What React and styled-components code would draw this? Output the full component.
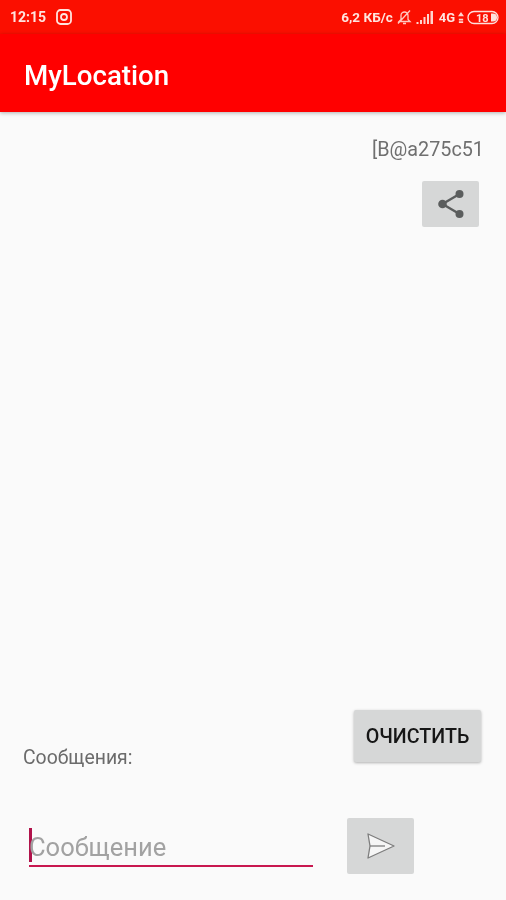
import React from "react";
import styled, { createGlobalStyle } from "styled-components";

const Global = createGlobalStyle`
  html, body { margin: 0; padding: 0; background: #fafafa; }
  body { font-family: Roboto, "Liberation Sans", sans-serif; }
`;
const Screen = styled.div`
  width: 506px; height: 900px; display: flex; flex-direction: column; background: #fafafa; overflow: hidden;
  filter: blur(0.5px);
`;
const StatusBar = styled.div`
  height: 34px; flex: none; background: #fb0f00; color: #ffe4de; display: flex; align-items: center;
  justify-content: space-between; padding: 0 7px 0 10px; font-size: 14px; font-weight: 700;
`;
const StatusGroup = styled.div`display: flex; align-items: center; gap: ${p => p.$gap || 6}px;`;
const SpeedText = styled.span`font-size: 13.5px;`;
const NetworkText = styled.span`font-size: 13px; margin-left: 2px;`;
const AppBar = styled.header`
  height: 78px; box-sizing: border-box; flex: none; background: #ff0000; color: #fff; display: flex; align-items: center;
  padding: 4px 24px 0; font-size: 27.7px; font-weight: 500; box-shadow: 0 1px 4px rgba(0,0,0,.3); position: relative;
`;
const Content = styled.main`flex: 1; display: flex; flex-direction: column; padding: 0 23px 0 23px;`;
const TopRight = styled.div`display: flex; flex-direction: column; align-items: flex-end; padding-top: 27px;`;
const CodeText = styled.div`font-size: 19.8px; line-height: 22px; color: #6f6f6f; margin-right: -1px;`;
const ShareButton = styled.button`
  width: 57px; height: 46px; margin: 20px 4px 0 0; padding: 0; border: 0; border-radius: 2px; background: #d6d7d7;
  display: flex; align-items: center; justify-content: center;
`;
const ClearRow = styled.div`display: flex; justify-content: space-between; align-items: flex-end; margin: 483px 2px 0 0;`;
const Label = styled.div`font-size: 19.4px; line-height: 22px; color: #6b6b6b; margin-bottom: -7px;`;
const ClearButton = styled.button`
  width: 127px; height: 52px; padding: 0; border: 0; border-radius: 2px; background: #d6d7d7; color: #161616;
  font: 500 19.7px Roboto, sans-serif; box-shadow: 0 1px 3px rgba(0,0,0,.3);
`;
const InputRow = styled.div`display: flex; align-items: flex-end; margin: 56px 0 0 6px;`;
const InputField = styled.div`
  width: 284px; height: 44px; box-sizing: border-box; border-bottom: 2px solid #c8174f; display: flex; align-items: center;
  font-size: 25.5px; color: #a2a2a2; margin-bottom: 7px;
`;
const Caret = styled.span`width: 3px; height: 34px; background: #b0124a; flex: none; margin-right: -3px; margin-top: 2px;`;
const Placeholder = styled.span`margin-top: 6px;`;
const SendButton = styled.button`
  width: 67px; height: 56px; margin-left: 34px; padding: 0; border: 0; border-radius: 2px; background: #d6d7d7;
  display: flex; align-items: center; justify-content: center;
`;

const Instagram = () => (
  <svg width="16" height="16" viewBox="0 0 16 16" fill="none" stroke="#ffe4de" strokeWidth="1.800">
    <rect x="1" y="1" width="14" height="14" rx="3.500" /><circle cx="8" cy="8" r="3" />
  </svg>
);
const Mute = () => (
  <svg width="17" height="18" viewBox="0 0 17 17" fill="none" stroke="#ffc9c0" strokeWidth="1.300">
    <path d="M3 13h11l-2-2V7a3.500 3.500 0 0 0-7 0v4zM7 15h3M2 15 14 2" />
  </svg>
);
const Signal = () => (
  <svg width="18" height="13" viewBox="0 0 17 13" fill="#ffd5cd">
    <path d="M0 11h2v2H0zM3.500 9h2v4h-2zM7 6h2v7H7zM10.500 3h2v10h-2zM14 0h2.500v13H14z" />
  </svg>
);
const Arrows = () => (
  <svg width="6" height="13" viewBox="0 0 7 13" fill="#ffd5cd"><path d="M3.500 0 7 5H0zM1 8h5v2H1zM1 11h5v2H1z" /></svg>
);
const Battery = () => (
  <svg width="32" height="15" viewBox="0 0 32 15">
    <rect x="1" y="1.500" width="30" height="12" rx="6" fill="none" stroke="#ffe2dc" strokeWidth="1.300" />
    <path d="M24 3.500h2a4 4 0 0 1 0 8h-2z" fill="#ffe2dc" />
    <text x="9" y="11.500" fontSize="11" fontWeight="700" fill="#ffe2dc" fontFamily="Roboto, sans-serif">18</text>
  </svg>
);
const ShareIcon = () => (
  <svg width="30" height="30" viewBox="0 0 30 30">
    <path d="M23.500 5 6.500 15l17 10" fill="none" stroke="#5b5d5d" strokeWidth="2.400" />
    <circle cx="23.500" cy="5" r="4" fill="#5b5d5d" /><circle cx="6.500" cy="15" r="4.300" fill="#5b5d5d" /><circle cx="23.500" cy="25" r="4" fill="#5b5d5d" />
  </svg>
);
const SendIcon = () => (
  <svg width="30" height="28" viewBox="0 0 30 28">
    <path d="M2 2 28 14 2 26l2-12z" fill="#f6f6f6" stroke="#7d7d7d" strokeWidth="1.300" strokeLinejoin="round" />
    <path d="M4 14h15" stroke="#7d7d7d" strokeWidth="1.300" />
  </svg>
);

export default function App() {
  return (
    <Screen>
      <Global />
      <StatusBar>
        <StatusGroup $gap={10}><span>12:15</span><Instagram /></StatusGroup>
        <StatusGroup $gap={3}><SpeedText>6,2 КБ/с</SpeedText><Mute /><Signal /><NetworkText>4G</NetworkText><Arrows /><Battery /></StatusGroup>
      </StatusBar>
      <AppBar>MyLocation</AppBar>
      <Content>
        <TopRight>
          <CodeText>[B@a275c51</CodeText>
          <ShareButton aria-label="share"><ShareIcon /></ShareButton>
        </TopRight>
        <ClearRow>
          <Label>Сообщения:</Label>
          <ClearButton>ОЧИСТИТЬ</ClearButton>
        </ClearRow>
        <InputRow>
          <InputField><Caret /><Placeholder>Сообщение</Placeholder></InputField>
          <SendButton aria-label="send"><SendIcon /></SendButton>
        </InputRow>
      </Content>
    </Screen>
  );
}
